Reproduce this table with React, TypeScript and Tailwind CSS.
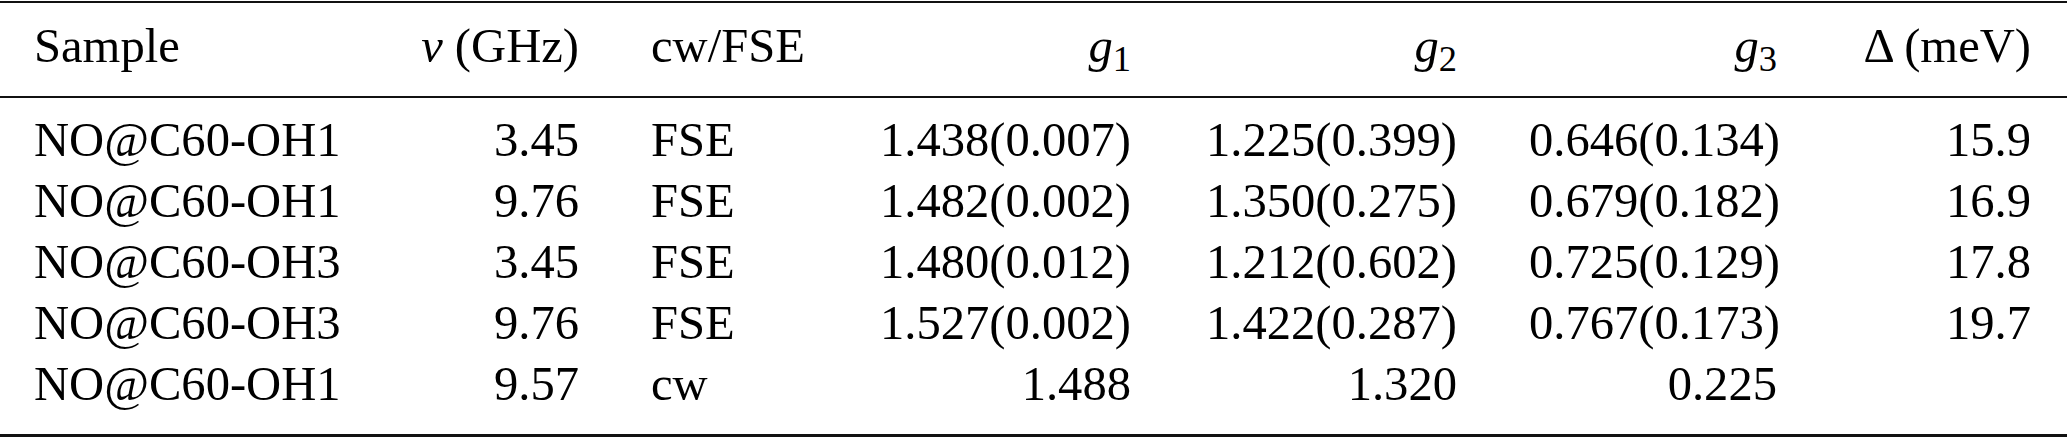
const cols = "grid grid-cols-[380px_235px_227px_325px_326px_320px_254px]";

const rows = [
  ["NO@C60-OH1", "3.45", "FSE", "1.438(0.007)", "1.225(0.399)", "0.646(0.134)", "15.9"],
  ["NO@C60-OH1", "9.76", "FSE", "1.482(0.002)", "1.350(0.275)", "0.679(0.182)", "16.9"],
  ["NO@C60-OH3", "3.45", "FSE", "1.480(0.012)", "1.212(0.602)", "0.725(0.129)", "17.8"],
  ["NO@C60-OH3", "9.76", "FSE", "1.527(0.002)", "1.422(0.287)", "0.767(0.173)", "19.7"],
  ["NO@C60-OH1", "9.57", "cw", "1.488", "1.320", "0.225", ""],
];

function G({ n }: { n: string }) {
  return (
    <>
      <span className="italic">g</span>
      <sub>{n}</sub>
    </>
  );
}

function Row({ cells }: { cells: React.ReactNode[] }) {
  return (
    <div className={`${cols} h-[61px] leading-[61px]`}>
      <div className="pl-[34px] pr-[36px] whitespace-nowrap">{cells[0]}</div>
      <div className="px-[36px] text-right whitespace-nowrap">{cells[1]}</div>
      <div className="px-[36px] whitespace-nowrap">{cells[2]}</div>
      <div className="px-[36px] text-right whitespace-nowrap">{cells[3]}</div>
      <div className="px-[36px] text-right whitespace-nowrap">{cells[4]}</div>
      <div className="px-[36px] text-right whitespace-nowrap">{cells[5]}</div>
      <div className="px-[36px] text-right whitespace-nowrap">{cells[6]}</div>
    </div>
  );
}

export default function App() {
  return (
    <div className="w-[2067px] h-[438px] bg-white text-black font-[family-name:Liberation_Serif,Times_New_Roman,serif] text-[48.6px]">
      {/* top rule */}
      <div className="mt-[1px] h-[2px] bg-[#111]" />

      <div className="pt-[13px] pb-[19px]">
        <Row
          cells={[
            "Sample",
            <>
              <span className="italic">ν</span> (GHz)
            </>,
            "cw/FSE",
            <G n="1" />,
            <G n="2" />,
            <G n="3" />,
            "Δ (meV)",
          ]}
        />
      </div>

      {/* mid rule */}
      <div className="h-[2px] bg-[#111]" />

      <div className="pt-[12px] pb-[19px]">
        {rows.map((r, i) => (
          <Row key={i} cells={r} />
        ))}
      </div>

      {/* bottom rule */}
      <div className="h-[3px] bg-[#111]" />
    </div>
  );
}
